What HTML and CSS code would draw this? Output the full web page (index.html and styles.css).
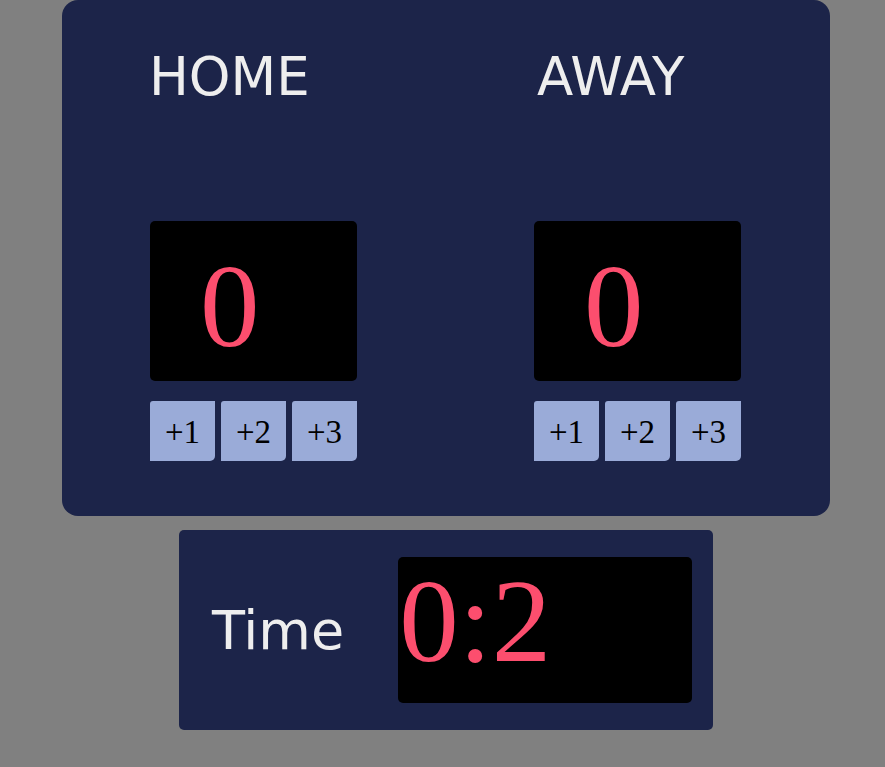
FILE: index.html
```html
<!DOCTYPE html>
<html lang="en">

<head>
    <meta charset="UTF-8">
    <title>Scoreboard</title>

    <link rel="stylesheet" href="styles.css">
</head>

<body>
    <main class="board">
        <section class="team team--home">
            <h1 class="team-name">HOME</h1>
            <div class="score">0</div>
            <div class="add-btns">
                <button class="add-btn">+1</button>
                <button class="add-btn">+2</button>
                <button class="add-btn">+3</button>
            </div>
        </section>
        <section class="team team--away">
            <h1 class="team-name">AWAY</h1>
            <div class="score">0</div>
            <div class="add-btns">
                <button class="add-btn">+1</button>
                <button class="add-btn">+2</button>
                <button class="add-btn">+3</button>
            </div>
        </section>
    </main>

    <section class="timer">
        <span class="timer-label">Time</span>
        <div class="timer-display">0:2</div>
    </section>
</body>

</html>
```

FILE: styles.css
```css
body,
html {
    margin: 0;
    padding: 0;
    background-color: #808080;
}

body {
    font-family: 'DejaVu Sans', Verdana, sans-serif;
}

.board {
    box-sizing: border-box;
    display: flex;
    justify-content: space-between;
    width: 768px;
    height: 516px;
    margin-left: 62px;
    padding: 0 89px 0 88px;
    background-color: #1c2449;
    border-radius: 16px;
}

.team {
    display: flex;
    flex-direction: column;
    width: 207px;
}

.team-name {
    margin: 45px 0 113px;
    font-size: 53px;
    font-weight: normal;
    line-height: 63px;
    color: #eeeeee;
}

.team--home .team-name {
    margin-left: -1px;
}

.team--away .team-name {
    margin-left: 3px;
}

.score {
    box-sizing: border-box;
    height: 160px;
    padding: 26px 0 0 50px;
    background-color: #000;
    border-radius: 5px;
    font-family: 'Liberation Serif', 'Times New Roman', serif;
    font-size: 119px;
    line-height: 1;
    color: #fc4e6e;
}

.add-btns {
    display: flex;
    gap: 6px;
    margin-top: 20px;
}

.add-btn {
    width: 65px;
    height: 60px;
    padding: 2px 0 0;
    border: none;
    border-radius: 3px 0 5px 0;
    background-color: #9aabd8;
    font-family: 'Liberation Serif', 'Times New Roman', serif;
    font-size: 33px;
    color: #000;
    cursor: pointer;
}

.timer {
    box-sizing: border-box;
    display: flex;
    align-items: center;
    gap: 54px;
    width: 534px;
    height: 200px;
    margin: 14px 0 0 179px;
    padding-left: 33px;
    background-color: #1c2449;
    border-radius: 5px;
}

.timer-label {
    font-size: 54px;
    line-height: 63px;
    color: #eeeeee;
}

.timer-display {
    box-sizing: border-box;
    width: 294px;
    height: 146px;
    padding: 5px 0 0 1px;
    background-color: #000;
    border-radius: 5px;
    font-family: 'Liberation Serif', 'Times New Roman', serif;
    font-size: 119px;
    line-height: 1;
    color: #fc4e6e;
}
```
